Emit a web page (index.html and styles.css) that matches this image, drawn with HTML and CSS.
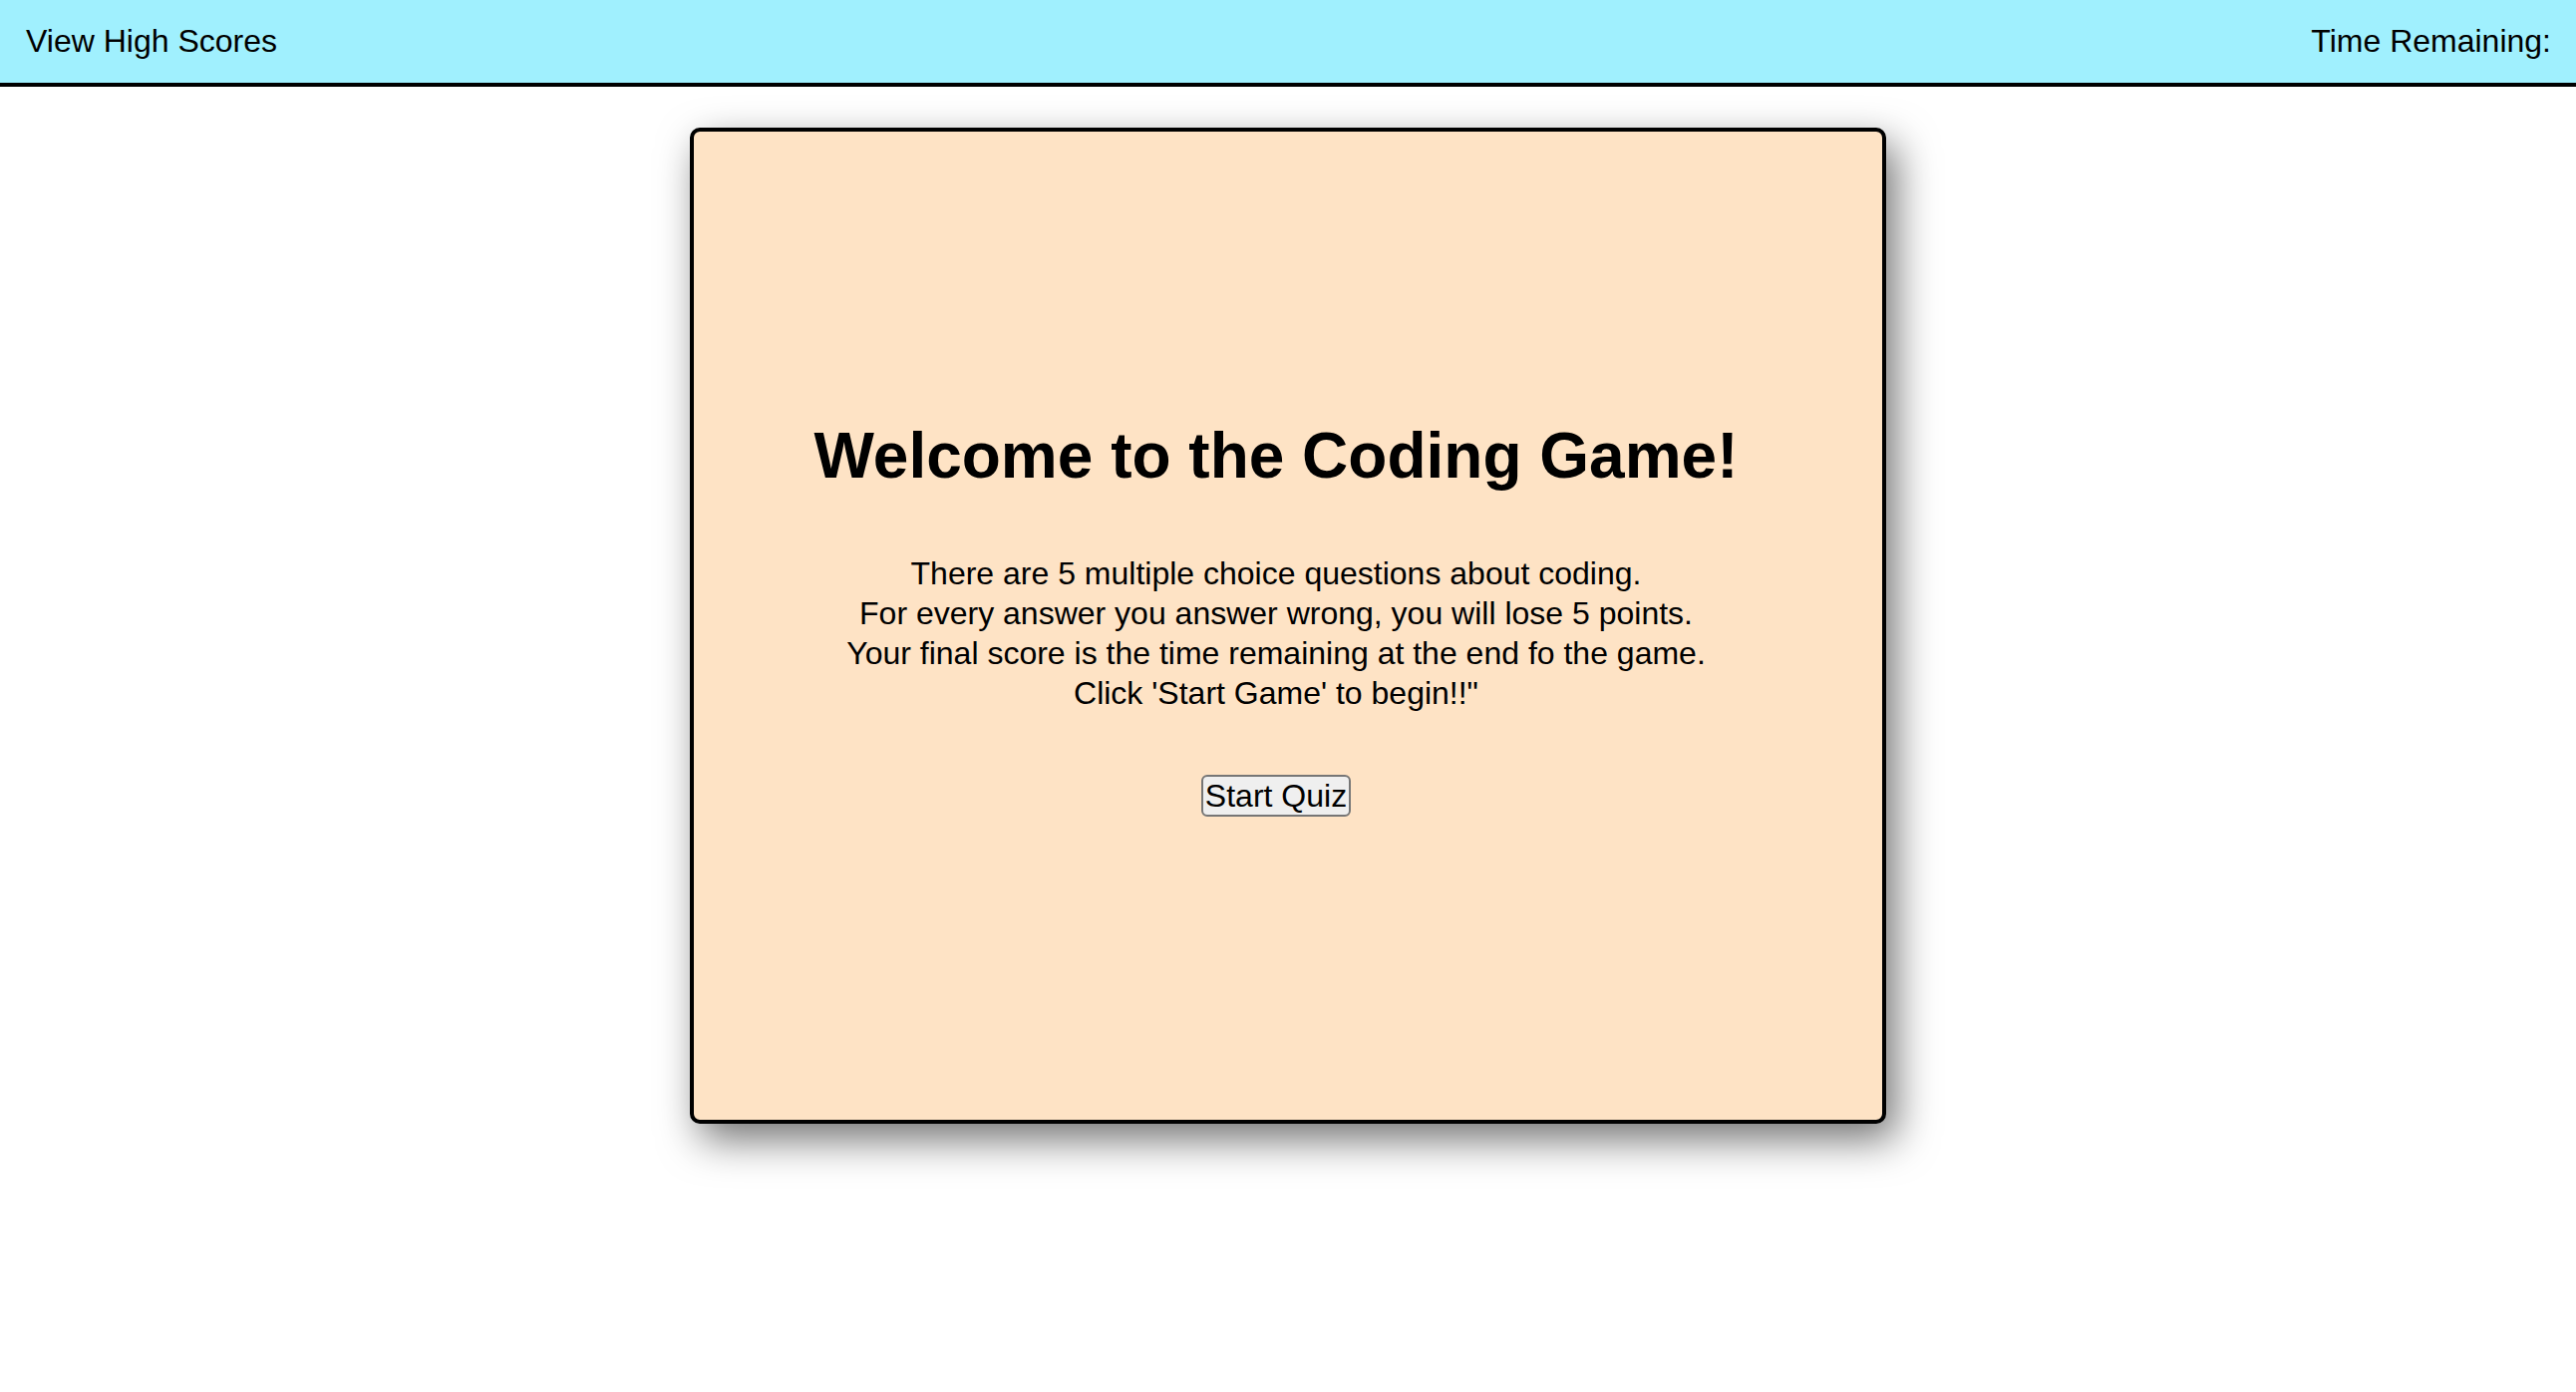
FILE: index.html
```html
<!DOCTYPE html>
<html lang="en">
<head>
<meta charset="utf-8">
<title>Coding Quiz</title>
<link rel="stylesheet" href="styles.css">
</head>
<body>
<header class="topbar">
  <a class="scores-link">View High Scores</a>
  <span class="timer">Time Remaining:</span>
</header>
<main class="stage">
  <section class="card">
    <h1 class="title">Welcome to the Coding Game!</h1>
    <p class="intro">There are 5 multiple choice questions about coding.<br>For every answer you answer wrong, you will lose 5 points.<br>Your final score is the time remaining at the end fo the game.<br>Click 'Start Game' to begin!!"</p>
    <button class="start-btn">Start Quiz</button>
  </section>
</main>
</body>
</html>
```
FILE: styles.css
```css
html {
  background: #ffffff;
}

body {
  margin: 0;
  padding: 0;
  min-height: 100vh;
  font-family: "Liberation Sans", Arial, Helvetica, sans-serif;
  font-size: 32px;
  color: #000;
}

.topbar {
  display: flex;
  justify-content: space-between;
  align-items: flex-start;
  background: #a0f0fe;
  height: 83px;
  box-sizing: content-box;
  border-bottom: 4px solid #000;
  padding: 0 25px 0 26px;
}

.scores-link, .timer {
  line-height: 37px;
  margin-top: 23px;
}

.stage {
  display: flex;
  justify-content: center;
  padding: 41px 0 120px 0;
}

.card {
  width: 1200px;
  height: 999px;
  box-sizing: border-box;
  background: #fee3c5;
  border: 4px solid #000;
  border-radius: 10px;
  box-shadow: 10px 16px 40px rgba(0, 0, 0, 0.55);
  display: flex;
  flex-direction: column;
  align-items: center;
  justify-content: center;
  padding: 0 24px 16px 0;
}

.title {
  font-size: 64px;
  font-weight: bold;
  line-height: 74px;
  margin: 0 0 61px 0;
}

.intro {
  margin: 0 0 62px 0;
  text-align: center;
  line-height: 40px;
}

.start-btn {
  font-family: "Liberation Sans", Arial, Helvetica, sans-serif;
  font-size: 32px;
  line-height: 36px;
  height: 42px;
  padding: 0 2px;
  background: #efefef;
  color: #000;
  border: 2px solid #767676;
  border-radius: 6px;
}
```
